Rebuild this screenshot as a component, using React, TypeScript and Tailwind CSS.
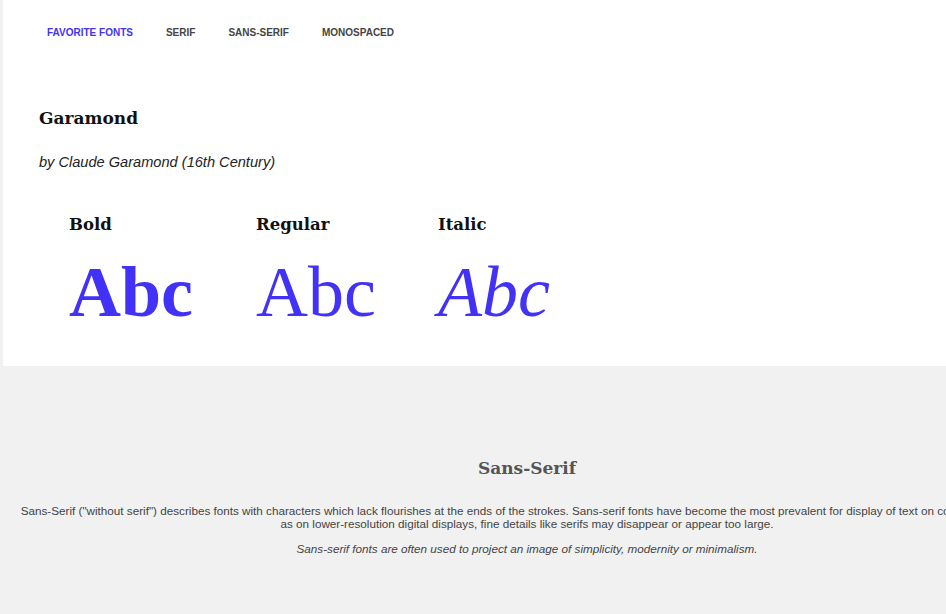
import React from "react";

const serifHead = { fontFamily: '"DejaVu Serif", Georgia, serif' };
const sans = { fontFamily: '"Liberation Sans", Arial, sans-serif' };
const times = { fontFamily: '"Liberation Serif", "Times New Roman", serif' };

export default function App() {
  return (
    <div className="w-[946px] h-[614px] overflow-hidden bg-[#f1f1f1]">
      <div className="w-[1054px]">
        <div className="ml-[3px] bg-white h-[366px]">
          <nav className="flex pt-[27px] pl-[27.5px] text-[10px] font-bold leading-[12px]" style={sans}>
            <span className="px-[16.5px] text-[#4231f6]">FAVORITE FONTS</span>
            <span className="px-[16.5px] text-[#444]">SERIF</span>
            <span className="px-[16.5px] text-[#444]">SANS-SERIF</span>
            <span className="px-[16.5px] text-[#444]">MONOSPACED</span>
          </nav>
          <div className="pl-[36px] pt-[69px]">
            <h1 className="text-[17px] font-bold text-[#111] leading-[20px]" style={serifHead}>Garamond</h1>
            <p className="mt-[25px] text-[14.6px] italic text-[#222] leading-[18px]" style={sans}>by Claude Garamond (16th Century)</p>
            <div className="flex pl-[30px] mt-[44px]">
              <div className="w-[187px]">
                <div className="text-[16.5px] font-bold text-[#111] leading-[20px]" style={serifHead}>Bold</div>
                <div className="text-[72px] font-bold text-[#4231f6] leading-[80px] mt-[17px]" style={times}>Abc</div>
              </div>
              <div className="w-[182px]">
                <div className="text-[16.5px] font-bold text-[#111] leading-[20px]" style={serifHead}>Regular</div>
                <div className="text-[72px] text-[#4231f6] leading-[80px] mt-[17px]" style={times}>Abc</div>
              </div>
              <div>
                <div className="text-[16.5px] font-bold text-[#111] leading-[20px]" style={serifHead}>Italic</div>
                <div className="text-[72px] italic text-[#4231f6] leading-[80px] mt-[17px]" style={times}>Abc</div>
              </div>
            </div>
          </div>
        </div>
        <div className="pt-[92px] text-center">
          <h2 className="text-[17px] font-bold text-[#555] leading-[20px]" style={serifHead}>Sans-Serif</h2>
          <p className="mt-[26px] text-[11.7px] text-[#444] leading-[13px]" style={sans}>
            Sans-Serif ("without serif") describes fonts with characters which lack flourishes at the ends of the strokes. Sans-serif fonts have become the most prevalent for display of text on computer screens,
            <br />
            as on lower-resolution digital displays, fine details like serifs may disappear or appear too large.
          </p>
          <p className="mt-[12px] text-[11.7px] italic text-[#444] leading-[14px]" style={sans}>
            Sans-serif fonts are often used to project an image of simplicity, modernity or minimalism.
          </p>
        </div>
      </div>
    </div>
  );
}
